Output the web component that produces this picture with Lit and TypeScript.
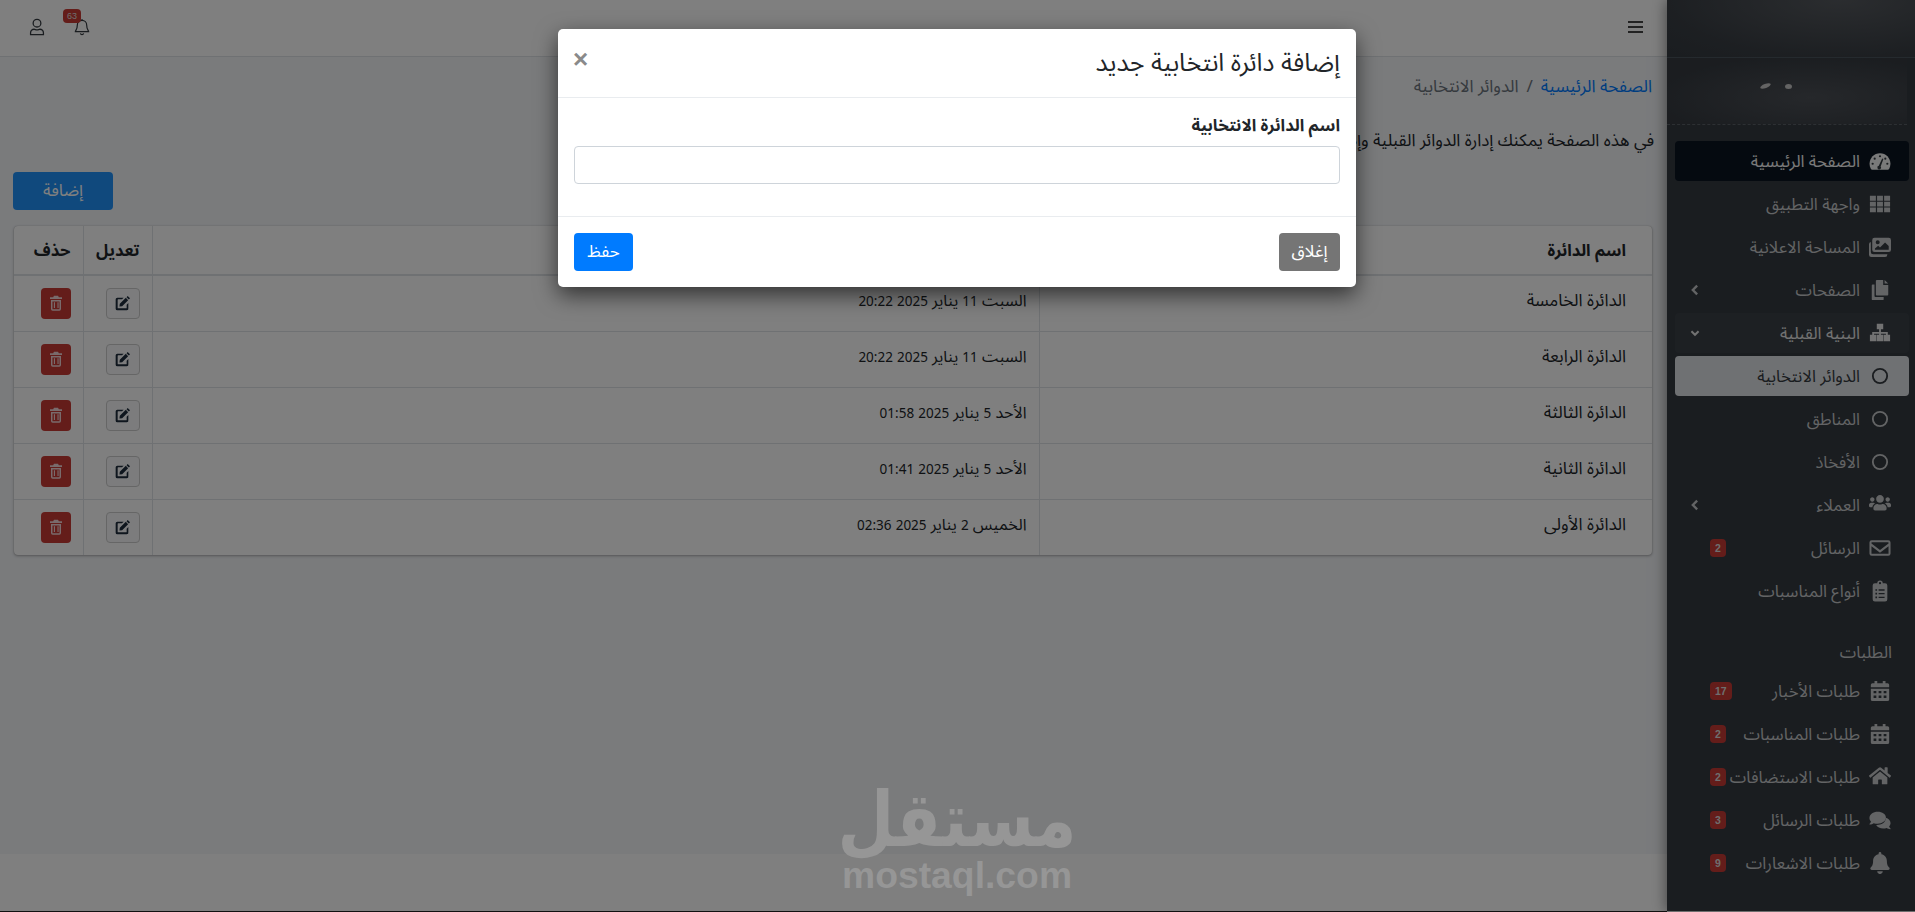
import { LitElement, html, css, svg } from "lit";
import { customElement } from "lit/decorators.js";

const I: Record<string, any> = {
  gauge: svg`<path d="M12 3.5C5.6 3.5.6 8.6.6 15c0 2 .5 3.9 1.5 5.6.3.5.8.9 1.4.9h17c.6 0 1.100-.4 1.400-.9 1-1.700 1.500-3.600 1.500-5.600 0-6.400-5-11.500-11.400-11.500z"/><g fill="#343a40"><circle cx="12" cy="6.800" r="1.200"/><circle cx="6.200" cy="9.500" r="1.200"/><circle cx="4" cy="15" r="1.200"/><circle cx="20" cy="15" r="1.200"/><circle cx="17.800" cy="9.500" r="1.200"/><path d="M10.700 17.300l3.700-8 1.300.5-3 8.200a2 2 0 1 1-2-.7z"/></g>`,
  th: svg`<path d="M1 3h6.500v5.500H1zM8.800 3h6.400v5.500H8.800zM16.500 3H23v5.500h-6.500zM1 9.500h6.500v5.200H1zM8.800 9.500h6.400v5.200H8.800zM16.500 9.500H23v5.200h-6.500zM1 15.700h6.500v5.300H1zM8.800 15.700h6.400v5.300H8.800zM16.500 15.700H23v5.300h-6.500z"/>`,
  images: svg`<path fill-rule="evenodd" d="M6 2h15.500A2.500 2.500 0 0 1 24 4.500V15a2.500 2.500 0 0 1-2.500 2.500H6A2.500 2.500 0 0 1 3.500 15V4.500A2.500 2.500 0 0 1 6 2zm3.500 2.600a2.200 2.200 0 1 0 0 4.400 2.200 2.200 0 0 0 0-4.400zM6.500 15h15v-4l-4-4-5.500 5.500-2-2-3.500 3z"/><path d="M2 6.500v11A2.500 2.500 0 0 0 4.500 20H20v.5a2.500 2.500 0 0 1-2.500 2.500h-15A2.500 2.500 0 0 1 0 20.500V9a2.500 2.500 0 0 1 2-2.500z"/>`,
  copy: svg`<path d="M15.500 1v5.500H21V17a1 1 0 0 1-1 1H8.500a1 1 0 0 1-1-1V2a1 1 0 0 1 1-1zM17 1l4 4h-4zM6 6v12.500a1 1 0 0 0 1 1h9V22a1 1 0 0 1-1 1H4a1 1 0 0 1-1-1V7a1 1 0 0 1 1-1z"/>`,
  sitemap: svg`<path d="M8.500 2h7v6h-2.500v2.800h7.500v3.200H23v7h-7v-7h2.500v-1.200H13V14h2.500v7h-7v-7H11v-1.200H5.500V14H8v7H1v-7h2.500v-3.200H11V8H8.500z"/>`,
  users: svg`<g transform="scale(.0375)"><path d="M96 224c35.300 0 64-28.700 64-64s-28.700-64-64-64-64 28.700-64 64 28.700 64 64 64zm448 0c35.300 0 64-28.700 64-64s-28.700-64-64-64-64 28.700-64 64 28.700 64 64 64zm32 32h-64c-17.600 0-33.500 7.100-45.100 18.600 40.300 22.100 68.900 62 75.100 109.400h66c17.700 0 32-14.300 32-32v-32c0-35.300-28.700-64-64-64zm-256 0c61.900 0 112-50.100 112-112S381.900 32 320 32 208 82.100 208 144s50.100 112 112 112zm76.800 32h-8.300c-20.800 10-43.900 16-68.500 16s-47.600-6-68.500-16h-8.300C179.600 288 128 339.600 128 403.200V432c0 26.500 21.500 48 48 48h288c26.500 0 48-21.500 48-48v-28.800c0-63.600-51.600-115.200-115.200-115.200zm-223.700-13.400C161.500 263.100 145.600 256 128 256H64c-35.300 0-64 28.700-64 64v32c0 17.700 14.300 32 32 32h65.900c6.300-47.400 34.900-87.300 75.200-109.400z"/></g>`,
  envelope: svg`<path fill-rule="evenodd" d="M3 3.500h18a2.500 2.500 0 0 1 2.500 2.500v12a2.500 2.500 0 0 1-2.500 2.500H3A2.500 2.500 0 0 1 .5 18V6A2.500 2.500 0 0 1 3 3.500zm-.3 3.700L12 14.300l9.300-7.100V6.200a.4.4 0 0 0-.3-.4H3a.4.4 0 0 0-.3.4zm0 2.900V18c0 .2.100.3.300.3h18c.2 0 .3-.1.300-.3v-7.900L12 17.100z"/>`,
  clip: svg`<path fill-rule="evenodd" d="M6.500 3.500H9a3 3 0 0 1 6 0h2.500A2.500 2.500 0 0 1 20 6v15a2.500 2.500 0 0 1-2.500 2.500h-11A2.500 2.500 0 0 1 4 21V6a2.500 2.500 0 0 1 2.500-2.500zM12 2.300a1.200 1.200 0 1 0 0 2.400 1.200 1.200 0 0 0 0-2.400zM7 10v1.800h1.800V10zm3.500.2v1.400H17v-1.400zM7 14v1.800h1.800V14zm3.500.2v1.400H17v-1.400zM7 18v1.800h1.800V18zm3.500.2v1.400H17v-1.400z"/>`,
  cal: svg`<path fill-rule="evenodd" d="M6 1h3v2.500h6V1h3v2.500h2.200A1.800 1.800 0 0 1 22 5.300V8H2V5.300a1.800 1.800 0 0 1 1.800-1.800H6zM2 9.500h20v11.700a1.800 1.800 0 0 1-1.800 1.800H3.800A1.800 1.800 0 0 1 2 21.200zM5 12v2.500h3V12zm5.500 0v2.500h3V12zM16 12v2.500h3V12zM5 17v2.500h3V17zm5.500 0v2.500h3V17zM16 17v2.500h3V17z"/>`,
  home: svg`<g transform="scale(.0417)"><path d="M280.370 148.260L96 300.110V464a16 16 0 0 0 16 16l112.060-.29a16 16 0 0 0 15.920-16V368a16 16 0 0 1 16-16h64a16 16 0 0 1 16 16v95.640a16 16 0 0 0 16 16.050L464 480a16 16 0 0 0 16-16V300L295.670 148.260a12.190 12.190 0 0 0-15.300 0zM571.600 251.470L488 182.560V44.050a12 12 0 0 0-12-12h-56a12 12 0 0 0-12 12v72.610L318.470 43a48 48 0 0 0-61 0L4.340 251.470a12 12 0 0 0-1.600 16.900l25.500 31A12 12 0 0 0 45.150 301l235.220-193.740a12.190 12.190 0 0 1 15.300 0L530.900 301a12 12 0 0 0 16.900-1.600l25.500-31a12 12 0 0 0-1.700-16.930z"/></g>`,
  comments: svg`<path d="M9.500 3C4.500 3 .5 6 .5 9.800c0 1.500.6 2.900 1.700 4-.6 1.300-1.600 2.400-1.700 2.500-.1.100-.1.300 0 .4 0 .1.200.2.300.2 1.800 0 3.300-.7 4.300-1.400 1.200.4 2.900.6 4.400.6 5 0 9-3 9-6.700S14.500 3 9.500 3z"/><path d="M23.500 21.200c-.1-.1-1-1-1.600-2.200 1-1 1.600-2.300 1.600-3.700 0-2.600-2.200-4.900-5.200-5.800 0 .1 0 .3 0 .4 0 4.800-4.900 7.600-9.900 7.600h-.6c1.300 2.400 4.200 3.900 7.700 3.900 1.200 0 2.700-.2 3.800-.6 1 .6 2.500 1.200 3.900 1.200.2 0 .3-.1.300-.2.100-.2.100-.4 0-.6z"/>`,
  bell: svg`<g transform="scale(.047) translate(31 0)"><path d="M224 512c35.320 0 63.970-28.650 63.970-64H160.030c0 35.350 28.650 64 63.970 64zm215.390-149.710c-19.320-20.760-55.470-51.990-55.470-154.290 0-77.700-54.480-139.900-127.940-155.160V32c0-17.670-14.320-32-31.980-32s-31.980 14.330-31.980 32v20.840C118.560 68.100 64.080 130.300 64.080 208c0 102.300-36.150 133.530-55.470 154.290-6 6.450-8.660 14.160-8.610 21.710.11 16.400 12.980 32 32.100 32h383.800c19.120 0 32-15.600 32.100-32 .05-7.550-2.610-15.270-8.610-21.710z"/></g>`,
};

const ic = (k: string) => html`<svg class="ic" viewBox="0 0 24 24" fill="currentColor">${I[k]}</svg>`;
const ring = html`<svg class="ic" viewBox="0 0 24 24" fill="none" stroke="currentColor" stroke-width="2"><circle cx="12" cy="12" r="7.800"/></svg>`;
const chevL = html`<svg class="chev" viewBox="0 0 10 14" fill="none" stroke="currentColor" stroke-width="2.800"><path d="M7.500 2L2.500 7l5 5"/></svg>`;
const chevD = html`<svg class="chev" viewBox="0 0 14 10" fill="none" stroke="currentColor" stroke-width="2.800"><path d="M2 2.500l5 5 5-5"/></svg>`;

type Item = { t: string; i?: string; cls?: string; c?: "l" | "d"; b?: string };
const nav1: Item[] = [
  { t: "الصفحة الرئيسية", i: "gauge", cls: "active" },
  { t: "واجهة التطبيق", i: "th" },
  { t: "المساحة الاعلانية", i: "images" },
  { t: "الصفحات", i: "copy", c: "l" },
  { t: "البنية القبلية", i: "sitemap", c: "d", cls: "open" },
  { t: "الدوائر الانتخابية", cls: "sub" },
  { t: "المناطق" },
  { t: "الأفخاذ" },
  { t: "العملاء", i: "users", c: "l" },
  { t: "الرسائل", i: "envelope", b: "2" },
  { t: "أنواع المناسبات", i: "clip" },
];
const nav2: Item[] = [
  { t: "طلبات الأخبار", i: "cal", b: "17" },
  { t: "طلبات المناسبات", i: "cal", b: "2" },
  { t: "طلبات الاستضافات", i: "home", b: "2" },
  { t: "طلبات الرسائل", i: "comments", b: "3" },
  { t: "طلبات الاشعارات", i: "bell", b: "9" },
];
const rows = [
  ["الدائرة الخامسة", "السبت 11 يناير 2025 20:22"],
  ["الدائرة الرابعة", "السبت 11 يناير 2025 20:22"],
  ["الدائرة الثالثة", "الأحد 5 يناير 2025 01:58"],
  ["الدائرة الثانية", "الأحد 5 يناير 2025 01:41"],
  ["الدائرة الأولى", "الخميس 2 يناير 2025 02:36"],
];

@customElement("app-root")
export class AppRoot extends LitElement {
  static styles = css`
    :host { display: block; height: 912px; overflow: hidden; font-family: "Noto Sans Arabic", "Noto Sans", "DejaVu Sans", sans-serif; font-size: 17px; color: #212529; }
    * { box-sizing: border-box; }
    .app { direction: rtl; display: grid; grid-template-columns: 248px 1fr; height: 912px; position: relative; }
    .side { background: #343a40; box-shadow: 0 0 14px rgba(0,0,0,.5); position: relative; z-index: 1; border-bottom: 1px solid #ddd; color: #c6c8ca; }
    .brand { height: 58px; border-bottom: 1px solid #4b545c; background: radial-gradient(ellipse at 70% 0, #565a5f 0, #3a3f45 70%, #343a40 100%); }
    .panel { height: 67px; border-bottom: 1px dashed #5a6067; display: flex; align-items: center; justify-content: center; gap: 14px; padding: 0 22px 10px 0; margin-right: 8px; background: radial-gradient(ellipse at 60% 60%, #4c5056 0, #363b41 75%); }
    .dot { width: 7px; height: 5px; border-radius: 50%; background: #c8c8c8; }
    .dot.s { width: 11px; height: 4px; transform: rotate(-20deg); }
    .nav { display: flex; flex-direction: column; gap: 3px; margin: 16px 6px 0 8px; }
    .it { height: 40px; border-radius: 4px; display: flex; align-items: center; padding: 0 17px 0 16px; font-size: 16.700px; }
    .it .ic { width: 24px; height: 22px; flex: none; margin-left: 8px; }
    .it .tx { flex: 1; white-space: nowrap; line-height: 42px; height: 40px; }
    .chev { width: 10px; height: 12px; flex: none; margin-left: -1px; }
    .badge { flex: none; background: #c93a35; color: #ddd; font: 700 10.500px "Liberation Sans", sans-serif; padding: 0 5px; height: 18px; line-height: 18px; border-radius: 4px; margin-left: 19px; }
    .active { background: #0a1420; color: #f4f4f4; }
    .open { background: #3b4147; color: #e4e4e4; }
    .sub { background: #dfe2e6; color: #343a40; }
    .hd { height: 37px; margin-top: 17px; display: flex; align-items: center; padding: 6px 17px 0 0; font-size: 16.700px; }
    .main { display: flex; flex-direction: column; min-width: 0; background: #f4f6f9; }
    .top { height: 57px; flex: none; background: #fff; border-bottom: 1px solid #dee2e6; display: flex; align-items: center; justify-content: space-between; padding: 0 24px 3px 29px; color: #343a40; }
    .burger { width: 15px; height: 12px; border-top: 2px solid #444; border-bottom: 2px solid #444; position: relative; }
    .burger::after { content: ""; position: absolute; inset: 3px 0 auto; height: 2px; background: #444; }
    .tools { display: flex; align-items: center; gap: 29px; }
    .bellwrap { position: relative; width: 16px; height: 18px; }
    .bellwrap svg, .user { display: block; width: 16px; height: 18px; }
    .nb { position: absolute; left: -11px; top: -9px; width: 18px; height: 14px; text-align: center; background: #c93a35; color: #ddd; font: 400 9px/14px "Liberation Sans", sans-serif; border-radius: 4px; }
    .content { flex: 1; display: flex; flex-direction: column; padding: 0 15px 0 13px; }
    .crumb { margin-top: 20px; height: 20px; line-height: 20px; color: #6c757d; display: flex; gap: 8px; white-space: nowrap; }
    .crumb a { color: #007bff; }
    .intro { margin: 34px -2px 0 0; height: 20px; line-height: 20px; white-space: nowrap; }
    .add { align-self: flex-end; margin-top: 21px; width: 100px; height: 38px; border: 0; border-radius: 4px; background: #2093fb; color: #fff; font: inherit; display: block; }
    .card { margin: 16px 0 0 1px; background: #fff; border-radius: 4px; box-shadow: 0 0 1px rgba(0,0,0,.25), 0 1px 3px rgba(0,0,0,.3); overflow: hidden; }
    table { border-collapse: collapse; width: 100%; table-layout: fixed; }
    th, td { text-align: right; padding: 0 12px 0 12px; border-left: 1px solid #dee2e6; font-size: 17px; white-space: nowrap; }
    th:last-child, td:last-child { border-left: 0; }
    th { height: 49px; font-weight: 700; font-size: 16.500px; border-bottom: 2px solid #dee2e6; }
    td { height: 56px; border-top: 1px solid #dee2e6; vertical-align: middle; }
    td.txt { padding-bottom: 4px; }
    td.dt { font-size: 16px; }
    .first { padding-right: 26px; }
    .n { font-size: 13.500px; }
    .ops { display: flex; justify-content: flex-start; }
    .btn { width: 34px; height: 31px; border-radius: 4px; display: flex; align-items: center; justify-content: center; }
    .edit { background: #f8f9fa; border: 1px solid #ccc; color: #1f2d3d; }
    .del { width: 30px; background: #c93a35; color: #f2d6d8; }
    .btn svg { width: 16px; height: 16px; display: block; }
    .foot { height: 58px; flex: none; background: #fff; border-bottom: 1px solid #222; }
    .veil { position: absolute; inset: 0; z-index: 5; background: rgba(0,0,0,.5); display: flex; justify-content: center; align-items: flex-start; padding: 29px 1px 0 0; }
    .modal { width: 798px; height: 258px; background: #fff; border-radius: 5px; box-shadow: 0 8px 22px rgba(0,0,0,.6); display: flex; flex-direction: column; }
    .mh { height: 69px; flex: none; display: flex; align-items: center; justify-content: space-between; padding: 0 16px; border-bottom: 1px solid #e9ecef; }
    .mh h5 { margin: 0; font-size: 25px; font-weight: 400; white-space: nowrap; }
    .x { font: 700 26px/1 "Liberation Sans", sans-serif; color: #8a8a8a; margin: -8px 0 0 -1px; }
    .mb { flex: 1; padding: 18px 16px 0; display: flex; flex-direction: column; }
    .mb label { height: 20px; line-height: 20px; font-weight: 700; font-size: 16.700px; margin-bottom: 10px; }
    .inp { display: block; width: 100%; height: 38px; border: 1px solid #ced4da; border-radius: 4px; background: #fff; }
    .mf { height: 71px; flex: none; border-top: 1px solid #e9ecef; display: flex; align-items: center; justify-content: space-between; padding: 0 16px 1px; }
    .b { height: 38px; border: 0; border-radius: 4px; color: #fff; font: inherit; padding: 0; }
    .close { width: 61px; background: #757575; }
    .save { width: 59px; background: #007bff; }
    .wm { position: absolute; left: 842px; top: 775px; width: 230px; z-index: 6; color: #969696; text-align: center; direction: ltr; pointer-events: none; }
    .wm .ar { font: 700 76px/82px "DejaVu Sans", sans-serif; margin-top: 4px; height: 78px; white-space: nowrap; direction: rtl; display: flex; justify-content: center; transform: scaleX(.86); }
    .wm .en { font: 700 37.300px/36px "Liberation Sans", sans-serif; white-space: nowrap; }
  `;

  item(x: Item) {
    return html`<div class="it ${x.cls ?? ""}">
      ${x.i ? ic(x.i) : ring}
      <span class="tx">${x.t}</span>
      ${x.c === "l" ? chevL : x.c === "d" ? chevD : ""}
      ${x.b ? html`<span class="badge">${x.b}</span>` : ""}
    </div>`;
  }

  date(s: string) {
    return s.split(/(\d[\d:]*)/).map((p) => (/^\d/.test(p) ? html`<span class="n">${p}</span>` : p));
  }

  render() {
    return html`<div class="app">
      <aside class="side">
        <div class="brand"></div>
        <div class="panel"><span class="dot"></span><span class="dot s"></span></div>
        <nav class="nav">
          ${nav1.map((x) => this.item(x))}
          <div class="hd">الطلبات</div>
          ${nav2.map((x) => this.item(x))}
        </nav>
      </aside>
      <main class="main">
        <header class="top">
          <div class="burger"></div>
          <div class="tools">
            <div class="bellwrap">
              <svg viewBox="0 0 24 26" fill="none" stroke="#343a40" stroke-width="1.800"><path d="M12 3a7 7 0 0 1 7 7c0 7 3 8 3 10H2c0-2 3-3 3-10a7 7 0 0 1 7-7zM9.500 22.500a2.600 2.600 0 0 0 5 0M12 1v2"/></svg>
              <span class="nb">63</span>
            </div>
            <svg class="user" viewBox="0 0 24 28" fill="none" stroke="#343a40" stroke-width="2"><circle cx="12" cy="8" r="6"/><path d="M2 26v-3a5.500 5.500 0 0 1 5.500-5.500c1.500 0 2.500 1 4.500 1s3-1 4.500-1A5.500 5.500 0 0 1 22 23v3z"/></svg>
          </div>
        </header>
        <section class="content">
          <div class="crumb"><a>الصفحة الرئيسية</a><span>/</span><span>الدوائر الانتخابية</span></div>
          <p class="intro">في هذه الصفحة يمكنك إدارة الدوائر القبلية وإضافة</p>
          <button class="add">إضافة</button>
          <div class="card">
            <table>
              <colgroup><col style="width:613px" /><col /><col style="width:69px" /><col style="width:69px" /></colgroup>
              <thead><tr><th class="first">اسم الدائرة</th><th></th><th>تعديل</th><th>حذف</th></tr></thead>
              <tbody>
                ${rows.map((r) => html`<tr>
                  <td class="first txt">${r[0]}</td><td class="txt dt">${this.date(r[1])}</td>
                  <td><div class="ops"><span class="btn edit"><svg viewBox="0 0 24 24" fill="currentColor"><path d="M3.500 4H13l-2.500 2.500H4.500a.5.500 0 0 0-.5.500v12.500c0 .3.200.5.500.500H17a.5.500 0 0 0 .5-.5v-5l2.500-2.500v8A2.500 2.500 0 0 1 17.500 23h-14A2.500 2.500 0 0 1 1 20.500v-14A2.500 2.500 0 0 1 3.500 4zM19 1.500l3.500 3.500-1.700 1.700-3.500-3.500zM16.200 4.300l3.500 3.500-9 9-4 .5.500-4z"/></svg></span></div></td>
                  <td><div class="ops"><span class="btn del"><svg viewBox="0 0 24 24" fill="currentColor"><path fill-rule="evenodd" d="M9 1h6l1.300 2.500H21V6H3V3.500h4.700zM4.500 7.500h15V21a2.500 2.500 0 0 1-2.500 2.500H7A2.500 2.500 0 0 1 4.500 21zm2.200 2.200V21c0 .2.100.3.300.3h10c.2 0 .3-.1.300-.3V9.700zm2.100 1.300h1.700v8.500H8.800zm5.400 0h1.700v8.500h-1.700z"/></svg></span></div></td>
                </tr>`)}
              </tbody>
            </table>
          </div>
        </section>
        <footer class="foot"></footer>
      </main>
      <div class="veil">
        <div class="modal">
          <div class="mh"><h5>إضافة دائرة انتخابية جديد</h5><span class="x">×</span></div>
          <div class="mb"><label>اسم الدائرة الانتخابية</label><input class="inp" /></div>
          <div class="mf"><button class="b close">إغلاق</button><button class="b save">حفظ</button></div>
        </div>
      </div>
      <div class="wm"><div class="ar">مستقل</div><div class="en">mostaql.com</div></div>
    </div>`;
  }
}
